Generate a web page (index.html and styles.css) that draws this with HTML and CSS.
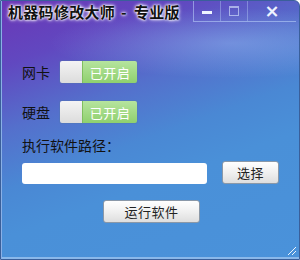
FILE: index.html
```html
<!DOCTYPE html>
<html>
<head>
<meta charset="utf-8">
<link rel="stylesheet" href="styles.css">
</head>
<body>
<div class="window">
  <div class="titlebar">
    <div class="title">机器码修改大师<span class="dash">-</span>专业版</div>
    <div class="controls">
      <div class="ctl ctl-min"><span class="min-bar"></span></div>
      <div class="ctl ctl-max"><span class="max-box"></span></div>
      <div class="ctl ctl-close">×</div>
    </div>
  </div>
  <div class="content">
    <div class="row">
      <span class="label">网卡</span>
      <div class="toggle"><span class="knob"></span><span class="state">已开启</span></div>
    </div>
    <div class="row">
      <span class="label">硬盘</span>
      <div class="toggle"><span class="knob"></span><span class="state">已开启</span></div>
    </div>
    <div class="path-label">执行软件路径：</div>
    <div class="path-row">
      <div class="input"></div>
      <button class="btn btn-choose">选择</button>
    </div>
    <div class="run-row">
      <button class="btn btn-run">运行软件</button>
    </div>
  </div>
  <div class="grip"></div>
</div>
</body>
</html>
```

FILE: styles.css
```css
html, body {
  margin: 0;
  padding: 0;
  width: 300px;
  height: 260px;
  overflow: hidden;
  font-family: "Noto Sans CJK SC", "Noto Sans", sans-serif;
}

.window {
  position: relative;
  width: 300px;
  height: 260px;
  box-sizing: border-box;
  border: 1px solid #3a5f9a;
  border-top-right-radius: 6px;
  background:
    radial-gradient(ellipse 260px 50px at 230px 42px, rgba(170, 210, 255, 0.35), rgba(170, 210, 255, 0) 70%),
    linear-gradient(160deg, #6b36b6 0%, #6148c0 18%, #5470cc 36%, #4a88d4 52%, #4a90d8 65%, #4a92da 100%);
  box-shadow: inset 1px 0 0 #8ab0e6, inset 0 -2px 0 #8ab8ea;
  display: flex;
  flex-direction: column;
}

.titlebar {
  height: 22px;
  display: flex;
  align-items: flex-start;
  justify-content: space-between;
}

.title {
  margin: 2px 0 0 7px;
  font-size: 15px;
  font-weight: bold;
  line-height: 18px;
  color: #111;
  letter-spacing: 0.3px;
  text-shadow: 0 0 2px #fff, 0 0 3px #fff, 0 0 4px #fff;
  white-space: nowrap;
}

.dash {
  display: inline-block;
  margin: 0 7px 0 6px;
}

.controls {
  display: flex;
  height: 20px;
  margin-right: 3px;
  border-bottom: 1px solid rgba(200, 225, 255, 0.5);
  border-left: 1px solid rgba(200, 225, 255, 0.5);
}

.ctl {
  width: 26px;
  height: 20px;
  display: flex;
  align-items: center;
  justify-content: center;
  border-right: 1px solid rgba(200, 225, 255, 0.35);
  color: #e8f0ff;
}

.ctl-close {
  width: 48px;
  border-right: none;
  font-size: 18px;
  font-weight: bold;
  font-family: "DejaVu Sans", sans-serif;
  line-height: 20px;
  color: #eef4ff;
}

.min-bar {
  width: 10px;
  height: 3px;
  background: #eef4ff;
  margin-top: 2px;
}

.max-box {
  width: 8px;
  height: 7px;
  border: 1px solid rgba(220, 235, 255, 0.6);
  border-top-width: 2px;
}

.content {
  padding: 38px 0 0 21px;
  display: flex;
  flex-direction: column;
}

.row {
  display: flex;
  align-items: center;
  height: 22px;
  margin-bottom: 18px;
}

.label {
  width: 38px;
  font-size: 14px;
  color: #111;
}

.toggle {
  display: flex;
  width: 77px;
  height: 22px;
  border-radius: 2px;
  overflow: hidden;
  box-shadow: 0 0 0 1px rgba(80, 120, 170, 0.35);
}

.knob {
  width: 22px;
  height: 22px;
  background: linear-gradient(#f4f4f4, #dcdcdc);
  border-right: 1px solid #7fbf5e;
}

.state {
  flex: 1;
  display: flex;
  align-items: center;
  justify-content: center;
  background: linear-gradient(#b6e49e, #8fd06e);
  color: #fff;
  font-size: 13px;
  letter-spacing: 0.5px;
}

.path-label {
  margin-top: -5px;
  font-size: 14px;
  line-height: 18px;
  color: #111;
}

.path-row {
  display: flex;
  align-items: center;
  margin-top: 8px;
}

.input {
  width: 185px;
  height: 21px;
  background: #fff;
  border-radius: 3px;
}

.btn {
  font-family: "Noto Sans CJK SC", "Noto Sans", sans-serif;
  font-size: 13px;
  color: #222;
  border: 1px solid #8a98a8;
  border-radius: 3px;
  background: linear-gradient(#ffffff, #f0f0f0 50%, #dedede);
  padding: 0;
  line-height: 20px;
  letter-spacing: 0.5px;
}

.btn-choose {
  margin-left: 15px;
  width: 57px;
  height: 23px;
  margin-top: -1px;
}

.run-row {
  display: flex;
  padding-left: 81px;
  margin-top: 16px;
}

.btn-run {
  width: 97px;
  height: 23px;
}

.grip {
  position: absolute;
  right: 3px;
  bottom: 4px;
  width: 10px;
  height: 10px;
  background: repeating-linear-gradient(135deg, transparent 0 2px, rgba(255, 255, 255, 0.9) 2px 3px);
  clip-path: polygon(100% 0, 100% 100%, 0 100%);
}
```
